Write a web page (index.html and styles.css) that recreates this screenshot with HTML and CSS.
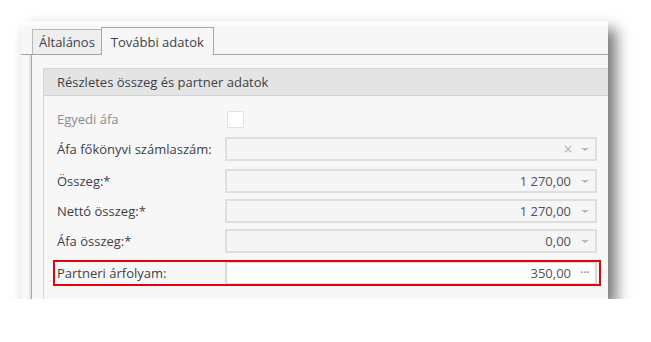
FILE: index.html
```html
<!DOCTYPE html>
<html lang="hu">
<head>
    <meta charset="UTF-8">
    <title>További adatok</title>
    <link rel="stylesheet" href="styles.css">
</head>
<body>
    <div class="window">
        <div class="tabs">
            <div class="tab">Általános</div>
            <div class="tab active">További adatok</div>
        </div>
        <div class="tab-page">
            <div class="group">
                <div class="group-header">Részletes összeg és partner adatok</div>
                <div class="group-body">
                    <div class="row">
                        <label class="disabled">Egyedi áfa</label>
                        <span class="checkbox"></span>
                    </div>
                    <div class="row">
                        <label>Áfa főkönyvi számlaszám:</label>
                        <div class="field">
                            <span class="value"></span>
                            <span class="clear">&times;</span>
                            <span class="drop"></span>
                        </div>
                    </div>
                    <div class="row spaced">
                        <label>Összeg:*</label>
                        <div class="field">
                            <span class="value">1 270,00</span>
                            <span class="drop"></span>
                        </div>
                    </div>
                    <div class="row">
                        <label>Nettó összeg:*</label>
                        <div class="field">
                            <span class="value">1 270,00</span>
                            <span class="drop"></span>
                        </div>
                    </div>
                    <div class="row">
                        <label>Áfa összeg:*</label>
                        <div class="field">
                            <span class="value">0,00</span>
                            <span class="drop"></span>
                        </div>
                    </div>
                    <div class="row spaced highlight">
                        <label>Partneri árfolyam:</label>
                        <div class="field editable">
                            <span class="value">350,00</span>
                            <span class="dots">&middot;&middot;&middot;</span>
                        </div>
                    </div>
                </div>
            </div>
        </div>
    </div>
</body>
</html>
```

FILE: styles.css
```css
* { margin: 0; padding: 0; box-sizing: border-box; }
body {
    font-family: "Open Sans", sans-serif;
    font-size: 13px;
    color: #3e3e48;
    background: #fff;
}
.window {
    margin: 21px 0 0 21px;
    width: 587px;
    height: 278px;
    background: #f7f7f7;
    border-top: 4px solid #fcfcfc;
    box-shadow: 8px 8px 14px rgba(0, 0, 0, 0.55);
    overflow: hidden;
}
.tabs {
    display: flex;
    align-items: flex-end;
    height: 30px;
    padding-left: 11px;
    border-bottom: 1px solid #a6a6a6;
}
.tab {
    height: 25px;
    padding: 0 6px;
    line-height: 24px;
    background: #eeeeee;
    border: 1px solid #b9b9b9;
    border-bottom: none;
    border-right: none;
}
.tab.active {
    height: 28px;
    margin-bottom: -1px;
    padding: 0 9px;
    line-height: 28px;
    background: #f7f7f7;
    border: 1px solid #a6a6a6;
    border-bottom: none;
}
.tab-page {
    margin-left: 10px;
    height: 260px;
    padding: 13px 0 0 11px;
    border-left: 1px solid #a6a6a6;
    box-shadow: -2px 0 0 #e4e4e4;
}
.group {
    border-left: 1px solid #d6d6d6;
    height: 240px;
}
.group-header {
    height: 28px;
    line-height: 26px;
    padding-left: 13px;
    background: #e4e4e4;
    border-top: 1px solid #d6d6d6;
    border-bottom: 1px solid #d2d2d2;
}
.group-body {
    display: flex;
    flex-direction: column;
    gap: 6px;
    padding: 11px 11px 0 13px;
}
.row {
    display: flex;
    align-items: center;
    height: 24px;
    position: relative;
}
.row.spaced {
    margin-top: 2px;
}
.row label {
    width: 168px;
    flex-shrink: 0;
}
.row label.disabled {
    color: #8c8c8c;
}
.checkbox {
    width: 17px;
    height: 17px;
    margin-left: 2px;
    background: #fff;
    border: 1px solid #e2e2e2;
}
.field {
    flex: 1;
    height: 24px;
    display: flex;
    align-items: center;
    background: #f5f5f5;
    border: 2px solid #dedede;
    color: #50505a;
}
.field.editable {
    background: #fff;
    border-color: #d8d8d8;
}
.value {
    flex: 1;
    text-align: right;
    padding-right: 4px;
}
.clear {
    width: 14px;
    text-align: center;
    color: #b4b4b4;
    font-size: 16px;
    line-height: 20px;
}
.drop {
    width: 20px;
    height: 20px;
    position: relative;
}
.drop::after {
    content: '';
    position: absolute;
    left: 6px;
    top: 9px;
    border-left: 4px solid transparent;
    border-right: 4px solid transparent;
    border-top: 3px solid #b8b8b8;
}
.dots {
    width: 20px;
    text-align: center;
    color: #6e6e78;
    font-size: 12px;
    letter-spacing: 0;
    line-height: 20px;
}
.highlight::after {
    content: '';
    position: absolute;
    top: -1px;
    bottom: -1px;
    left: -4px;
    right: -4px;
    border: 2px solid #e8000a;
}
```
